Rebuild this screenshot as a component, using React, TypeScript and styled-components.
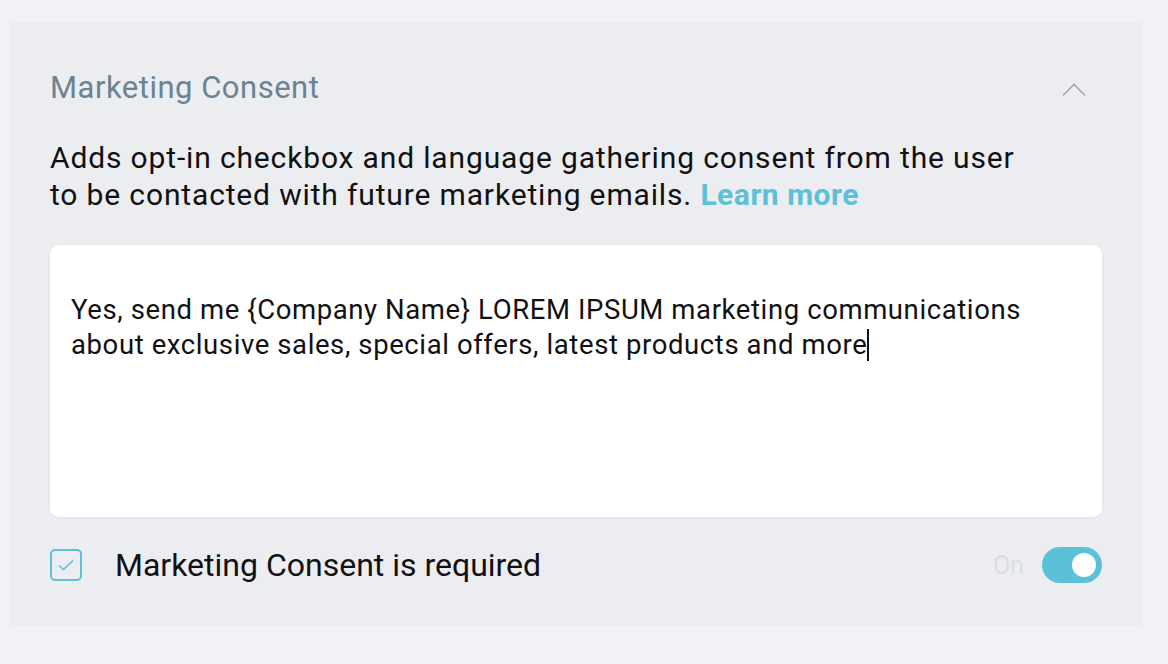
import React from "react";
import styled, { createGlobalStyle } from "styled-components";

const Global = createGlobalStyle`
  html, body { margin: 0; padding: 0; background: #f1f2f6; }
  body { font-family: Roboto, "Liberation Sans", sans-serif; -webkit-font-smoothing: antialiased; }
  * { box-sizing: border-box; }
`;

const Panel = styled.section`
  margin: 22px 0 0 10px;
  width: 1132px;
  height: 604px;
  background: #ecedf1;
  padding: 48px 40px 0 40px;
  display: flex;
  flex-direction: column;
`;

const Header = styled.div`
  display: flex;
  align-items: center;
  justify-content: space-between;
  height: 36px;
`;

const Title = styled.h2`
  margin: 0;
  font-size: 31px;
  letter-spacing: 0.5px;
  font-weight: 400;
  color: #6b8393;
  line-height: 36px;
`;

const Chevron = styled.button`
  border: 0;
  background: transparent;
  padding: 0;
  margin-right: 16px;
  width: 24px;
  height: 14px;
  display: flex;
  margin-top: 4px;
`;

const Description = styled.p`
  margin: 33px 0 0 0;
  font-size: 30px;
  letter-spacing: 0.85px;
  line-height: 37px;
  color: #111;
  max-width: 985px;
`;

const Link = styled.a`
  color: #5bc0d8;
  font-weight: 700;
  letter-spacing: 0.5px;
  text-decoration: none;
`;

const Editor = styled.div`
  margin-top: 32px;
  height: 272px;
  background: #fff;
  border-radius: 9px;
  box-shadow: 0 1px 3px rgba(0, 0, 0, 0.06);
  padding: 47px 21px 0 21px;
  font-size: 27.5px;
  letter-spacing: 0.6px;
  line-height: 35px;
  color: #111;
`;

const Caret = styled.span`
  display: inline-block;
  width: 2px;
  height: 32px;
  background: #111;
  vertical-align: -7px;
`;

const Footer = styled.div`
  margin-top: 30px;
  display: flex;
  align-items: center;
  height: 36px;
`;

const Check = styled.span`
  width: 32px;
  height: 32px;
  border: 2px solid #5bc0d8;
  border-radius: 5px;
  display: flex;
  align-items: center;
  justify-content: center;
  flex-shrink: 0;
`;

const Label = styled.span`
  margin-left: 33px;
  font-size: 32px;
  color: #111;
  flex: 1;
`;

const OnText = styled.span`
  font-size: 25px;
  color: #dcdde2;
  margin-right: 18px;
`;

const Toggle = styled.span<{ $on: boolean }>`
  width: 60px;
  height: 36px;
  border-radius: 18px;
  background: ${(p) => (p.$on ? "#5bc0d8" : "#ccc")};
  display: flex;
  align-items: center;
  justify-content: ${(p) => (p.$on ? "flex-end" : "flex-start")};
  padding: 0 6px;
`;

const Knob = styled.span`
  width: 24px;
  height: 24px;
  border-radius: 50%;
  background: #fff;
`;

export default function App() {
  return (
    <>
      <Global />
      <Panel>
        <Header>
          <Title>Marketing Consent</Title>
          <Chevron aria-label="collapse">
            <svg width="24" height="14" viewBox="0 0 24 14">
              <path d="M1 12.5 L12 1.5 L23 12.5" fill="none" stroke="#a3a7ab" strokeWidth="1.6" />
            </svg>
          </Chevron>
        </Header>
        <Description>
          Adds opt-in checkbox and language gathering consent from the user to be contacted with future marketing emails.{" "}
          <Link href="#">Learn more</Link>
        </Description>
        <Editor>
          Yes, send me {"{Company Name}"} LOREM IPSUM marketing communications
          <br />
          about exclusive sales, special offers, latest products and more
          <Caret />
        </Editor>
        <Footer>
          <Check>
            <svg width="18" height="14" viewBox="0 0 18 14">
              <path d="M2 7.5 L6.5 11.5 L16 2.5" fill="none" stroke="#5bc0d8" strokeWidth="1.6" />
            </svg>
          </Check>
          <Label>Marketing Consent is required</Label>
          <OnText>On</OnText>
          <Toggle $on={true}>
            <Knob />
          </Toggle>
        </Footer>
      </Panel>
    </>
  );
}
